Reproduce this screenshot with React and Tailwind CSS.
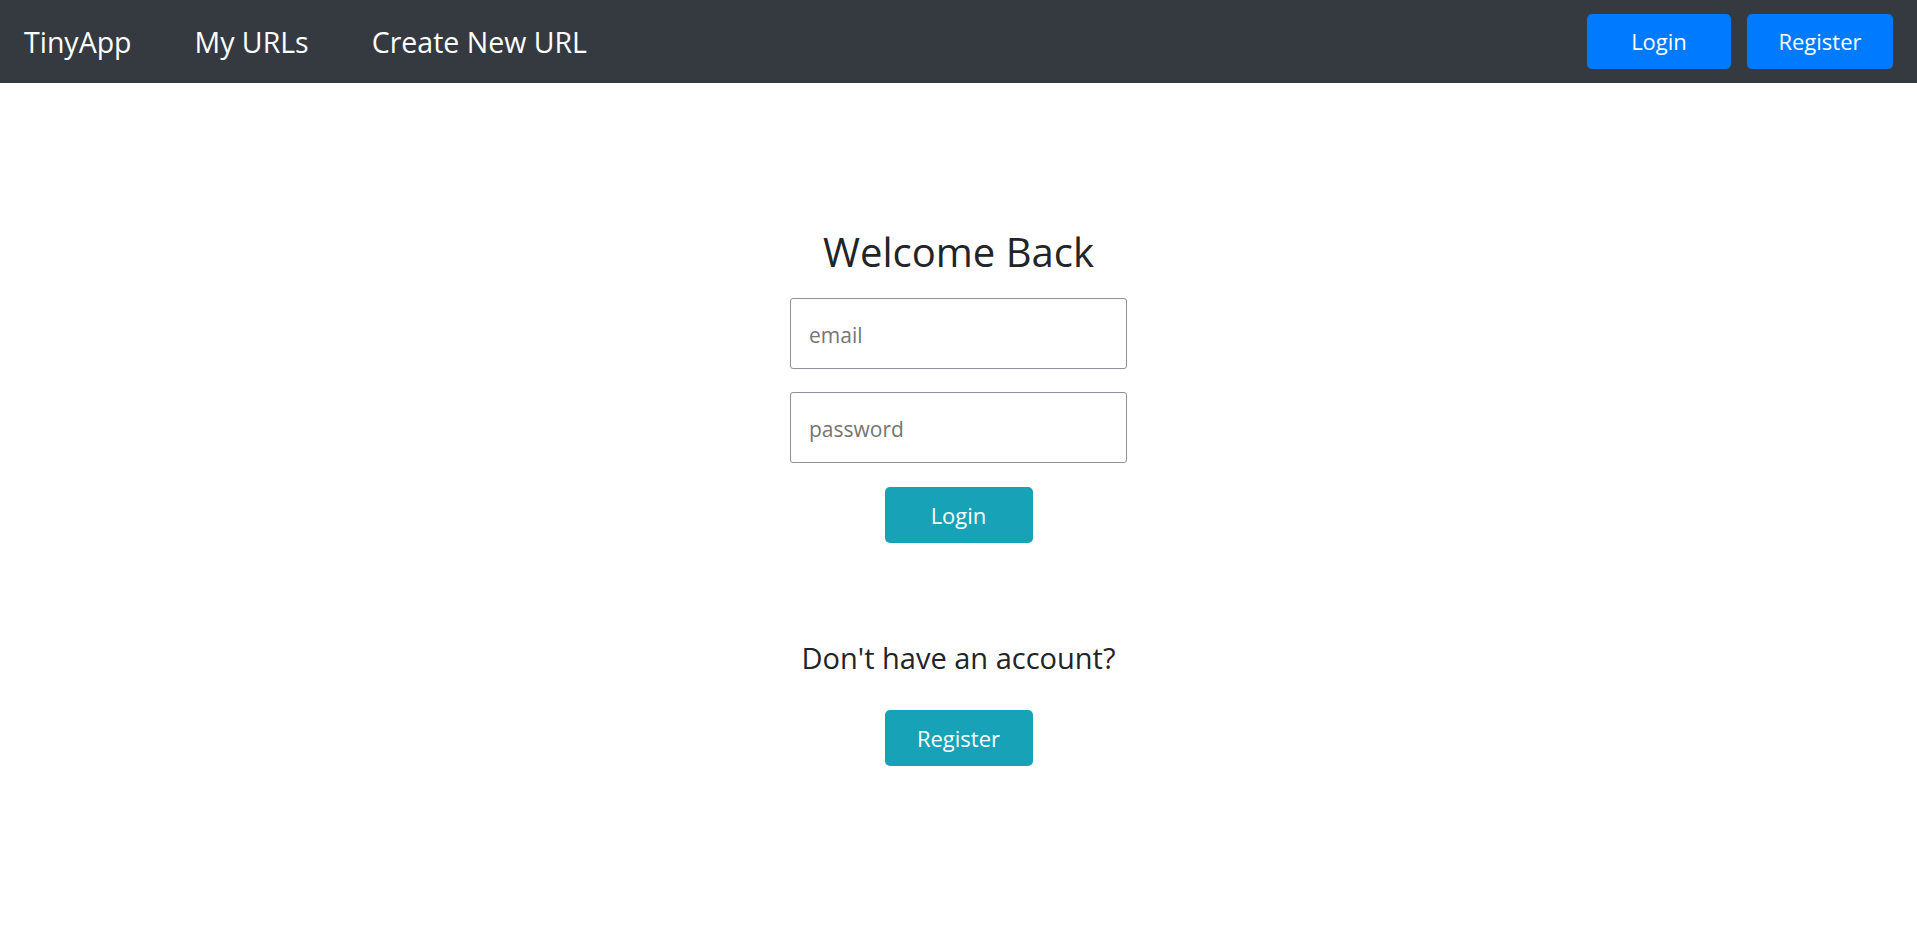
export default function App() {
  return (
    <div className="min-h-[933px] bg-white font-['Open_Sans',sans-serif] text-[#212529]">
      {/* Top navbar */}
      <nav className="flex h-[83px] items-center justify-between bg-[#343a40] pl-[24px] pr-[24px]">
        <div className="flex items-center gap-[63px] text-[28.5px] leading-[42px] text-white">
          <a href="#">TinyApp</a>
          <a href="#">My URLs</a>
          <a href="#">Create New URL</a>
        </div>
        <div className="flex items-center gap-[16px]">
          <button className="h-[55px] w-[144px] rounded-[5px] bg-[#007bff] text-[22px] text-white">
            Login
          </button>
          <button className="h-[55px] w-[146px] rounded-[5px] bg-[#007bff] text-[22px] text-white">
            Register
          </button>
        </div>
      </nav>

      {/* Login form */}
      <main className="flex flex-col items-center pt-[145px]">
        <h2 className="text-[40px] leading-[48px]">Welcome Back</h2>
        <form className="mt-[22px] flex flex-col items-center">
          <input
            type="email"
            placeholder="email"
            className="h-[71px] w-[337px] rounded-[3px] border border-[#8f8f9d] px-[18px] pt-[2px] text-[21px] outline-none placeholder:text-[#757575]"
          />
          <input
            type="password"
            placeholder="password"
            className="mt-[23px] h-[71px] w-[337px] rounded-[3px] border border-[#8f8f9d] px-[18px] pt-[2px] text-[21px] outline-none placeholder:text-[#757575]"
          />
          <button
            type="button"
            className="mt-[24px] h-[56px] w-[148px] rounded-[5px] bg-[#17a2b8] text-[22px] text-white"
          >
            Login
          </button>
        </form>

        <p className="mt-[94px] text-[29px] leading-[42px]">Don't have an account?</p>
        <button className="mt-[31px] h-[56px] w-[148px] rounded-[5px] bg-[#17a2b8] text-[22px] text-white">
          Register
        </button>
      </main>
    </div>
  )
}
